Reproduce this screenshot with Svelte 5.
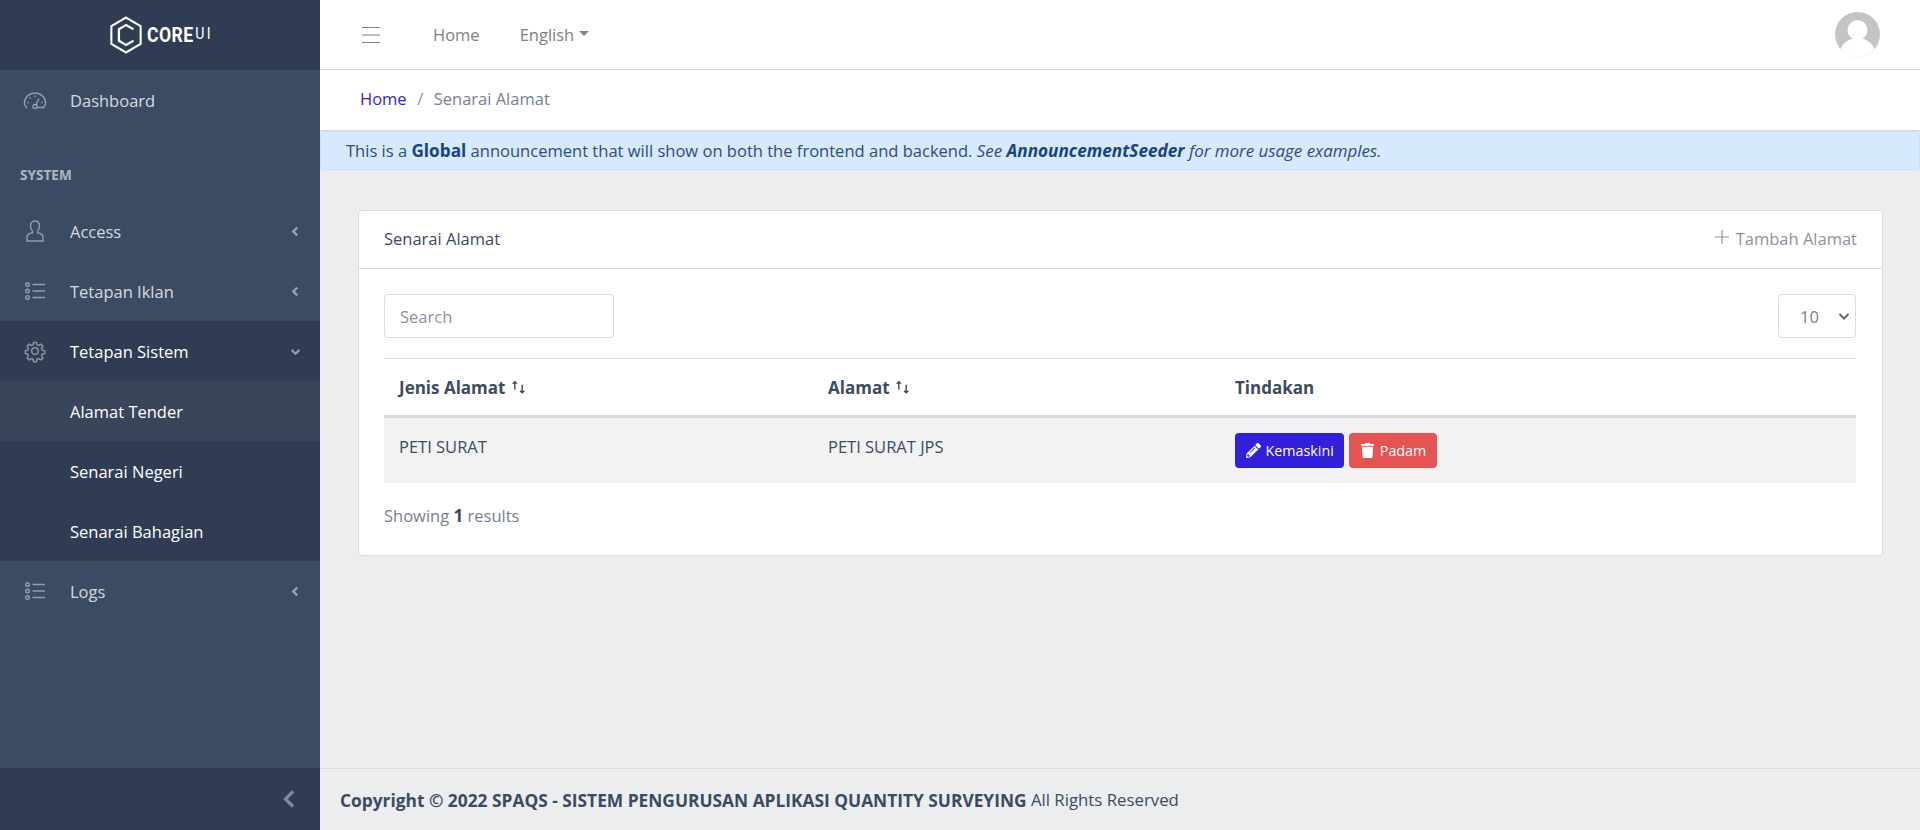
<script>
  const columns = [
    { label: 'Jenis Alamat', sort: true, width: '429px' },
    { label: 'Alamat', sort: true, width: '407px' },
    { label: 'Tindakan', sort: false, width: 'auto' }
  ];
</script>

{#snippet navIcon(name)}
  <svg class="nav-icon" viewBox="0 0 24 24" fill="none" stroke="currentColor" stroke-width="1.4">
    {#if name === 'speedometer'}
      <path d="M4.200 19.500h-.9C2 18 1.400 16.500 1.400 14.800 1.400 9.500 6 5 12 5s10.600 4.500 10.600 9.800c0 1.700-.6 3.200-1.900 4.700h-6.500" />
      <circle cx="12" cy="18.500" r="2" />
      <path d="M13 16.800l2.900-6.300M12 7.500V9M6.500 9.500l1 1M4.300 14.500h1.500M18.200 14.500h1.500" />
    {:else if name === 'user'}
      <path d="M12 2c-3 0-4.500 2.200-4.500 5 0 2 .7 3.800 2 5v1.800c-2.800.6-5.500 1.700-5.500 3.800V22h16v-4.400c0-2.100-2.700-3.200-5.500-3.800V12c1.300-1.200 2-3 2-5 0-2.800-1.500-5-4.500-5z" />
    {:else if name === 'list'}
      <circle cx="4.500" cy="5.500" r="1.800" />
      <circle cx="4.500" cy="12" r="1.800" />
      <circle cx="4.500" cy="18.500" r="1.800" />
      <path d="M9.500 5.500h12.500M9.500 12h12.500M9.500 18.500h12.500" />
    {:else if name === 'settings'}
      <g transform="translate(12 12) scale(.82) translate(-12 -12)" stroke-width="1.800" stroke-linejoin="round">
        <path d="M10.200 1.500h3.600l.5 3 2.300.9 2.500-1.800 2.600 2.600-1.800 2.500.9 2.300 3 .5v3.600l-3 .5-.9 2.300 1.800 2.500-2.600 2.600-2.500-1.800-2.300.9-.5 3h-3.600l-.5-3-2.300-.9-2.500 1.800-2.600-2.600 1.800-2.500-.9-2.300-3-.5v-3.600l3-.5.9-2.300-1.800-2.500 2.600-2.600 2.500 1.800 2.300-.9z" />
        <circle cx="12" cy="12" r="4" />
      </g>
    {/if}
  </svg>
{/snippet}

{#snippet navItem(label, icon, open, chevron)}
  <div class="nav-item" class:open>
    {@render navIcon(icon)}
    <span>{label}</span>
    {#if chevron}
      <svg class="chev" class:down={open} viewBox="0 0 10 10" fill="none" stroke="currentColor" stroke-width="2">
        <path d="M6.500 1.500L3 5l3.500 3.500" />
      </svg>
    {/if}
  </div>
{/snippet}

<div class="app">
  <aside class="sidebar">
    <div class="brand">
      <svg class="hex" viewBox="0 0 36 40" fill="none" stroke="#fff">
        <path stroke-width="2.200" d="M18 1.500L33.500 10.500v19L18 38.500 2.500 29.500v-19z" />
        <path stroke-width="2.400" d="M26 13.800L18 9.500 10.500 13.800v12.400L18 30.500l8-4.300" />
      </svg>
      <span class="brand-text">CORE<span class="brand-ui">UI</span></span>
    </div>
    <nav class="nav">
      {@render navItem('Dashboard', 'speedometer', false, false)}
      <div class="nav-title">SYSTEM</div>
      {@render navItem('Access', 'user', false, true)}
      {@render navItem('Tetapan Iklan', 'list', false, true)}
      {@render navItem('Tetapan Sistem', 'settings', true, true)}
      <div class="sub">
        <div class="sub-item active">Alamat Tender</div>
        <div class="sub-item">Senarai Negeri</div>
        <div class="sub-item">Senarai Bahagian</div>
      </div>
      {@render navItem('Logs', 'list', false, true)}
    </nav>
    <div class="minimizer">
      <svg viewBox="0 0 14 20" fill="none" stroke="currentColor" stroke-width="3.200">
        <path d="M11 2.500L3.500 10l7.500 7.500" />
      </svg>
    </div>
  </aside>

  <div class="main">
    <header class="topbar">
      <svg class="burger" viewBox="0 0 18 18" stroke="currentColor" stroke-width="1">
        <path d="M0 1.500h18M0 9h18M0 16.500h18" />
      </svg>
      <a class="top-link">Home</a>
      <a class="top-link">English<i class="caret"></i></a>
      <svg class="avatar" viewBox="0 0 45 45">
        <circle cx="22.500" cy="22.500" r="22.500" fill="#c4c4c4" />
        <circle cx="22.500" cy="18" r="10" fill="#fff" />
        <path d="M5.500 37c3-7 9-11 17-11s14 4 17 11c-4 5-10 8-17 8s-13-3-17-8z" fill="#fff" />
      </svg>
    </header>

    <div class="crumbs">
      <a class="crumb-link">Home</a>
      <span class="sep">/</span>
      <span>Senarai Alamat</span>
    </div>

    <div class="announce">
      This is a <strong>Global</strong> announcement that will show on both the frontend and backend.
      <em>See <strong>AnnouncementSeeder</strong> for more usage examples.</em>
    </div>

    <main class="content">
      <section class="card">
        <div class="card-head">
          <span>Senarai Alamat</span>
          <a class="add">
            <svg viewBox="0 0 16 16" stroke="currentColor" stroke-width="1.200"><path d="M8 1v14M1 8h14" /></svg>
            Tambah Alamat
          </a>
        </div>
        <div class="card-body">
          <div class="tools">
            <input class="search" type="text" placeholder="Search" />
            <div class="perpage">
              <span>10</span>
              <svg viewBox="0 0 12 12" fill="none" stroke="currentColor" stroke-width="2"><path d="M1.500 4L6 8.500 10.500 4" /></svg>
            </div>
          </div>

          <table>
            <thead>
              <tr>
                {#each columns as col}
                  <th style:width={col.width}>
                    {col.label}
                    {#if col.sort}
                      <svg class="sort" viewBox="0 0 16 14" fill="none" stroke="currentColor" stroke-width="1.300">
                        <path d="M4.500 9V1.500M2.500 3.500l2-2 2 2M11.500 4.500V12M9.500 10l2 2 2-2" />
                      </svg>
                    {/if}
                  </th>
                {/each}
              </tr>
            </thead>
            <tbody>
              <tr>
                <td>PETI SURAT</td>
                <td>PETI SURAT JPS</td>
                <td class="actions">
                  <button class="btn primary">
                    <svg viewBox="0 0 512 512" fill="currentColor"><path d="M497.900 142.100l-46.100 46.100c-4.700 4.700-12.300 4.700-17 0l-111-111c-4.700-4.700-4.700-12.300 0-17l46.100-46.100c18.700-18.700 49.100-18.700 67.900 0l60.100 60.100c18.800 18.700 18.800 49.100 0 67.900zM284.200 99.800L21.600 362.400.4 483.900c-2.900 16.400 11.400 30.600 27.800 27.800l121.500-21.300 262.600-262.600c4.700-4.700 4.700-12.300 0-17l-111-111c-4.800-4.700-12.400-4.700-17.100 0zM124.100 339.900c-5.500-5.500-5.500-14.300 0-19.800l154-154c5.500-5.500 14.300-5.500 19.800 0s5.500 14.300 0 19.800l-154 154c-5.500 5.500-14.300 5.500-19.800 0zM88 424h48v36.300l-64.500 11.300-31.100-31.100L51.700 376H88v48z" /></svg>
                    Kemaskini
                  </button>
                  <button class="btn danger">
                    <svg viewBox="0 0 448 512" fill="currentColor"><path d="M432 32H312l-9.400-18.700A24 24 0 0 0 281.100 0H166.800a23.700 23.700 0 0 0-21.400 13.300L136 32H16A16 16 0 0 0 0 48v32a16 16 0 0 0 16 16h416a16 16 0 0 0 16-16V48a16 16 0 0 0-16-16zM53.200 467a48 48 0 0 0 47.900 45h245.800a48 48 0 0 0 47.900-45L416 128H32z" /></svg>
                    Padam
                  </button>
                </td>
              </tr>
            </tbody>
          </table>

          <div class="showing">Showing <strong>1</strong> results</div>
        </div>
      </section>
    </main>

    <footer class="footer">
      <strong>Copyright © 2022 SPAQS - SISTEM PENGURUSAN APLIKASI QUANTITY SURVEYING</strong>&nbsp;All Rights Reserved
    </footer>
  </div>
</div>

<style>
  :global(body) {
    margin: 0;
    font-family: 'Open Sans', 'Noto Sans', sans-serif;
    font-size: 16.5px;
    color: #3c4b64;
  }
  strong { font-size: 17.2px; }
  .app { display: flex; height: 830px; overflow: hidden; }

  .sidebar {
    width: 320px;
    flex: none;
    display: flex;
    flex-direction: column;
    background: #3c4b64;
    color: #fff;
  }
  .brand {
    height: 70px;
    flex: none;
    display: flex;
    align-items: center;
    justify-content: center;
    gap: 4px;
    background: #303c54;
  }
  .hex { width: 34px; height: 38px; }
  .brand-text {
    width: 64px;
    font-family: Roboto, sans-serif;
    font-weight: 700;
    font-size: 20px;
    letter-spacing: 0.5px;
    line-height: 1;
    white-space: nowrap;
    transform: scaleX(0.88);
    transform-origin: left center;
  }
  .brand-ui {
    font-size: 16px;
    font-weight: 400;
    letter-spacing: 2.500px;
    margin-left: 2px;
    position: relative;
    top: -3px;
  }

  .nav { flex: 1; }
  .nav-item {
    height: 60px;
    display: flex;
    align-items: center;
    color: rgba(255, 255, 255, 0.8);
    padding: 0 19px 0 23px;
  }
  .nav-item.open { background: #303c54; color: #fff; }
  .nav-icon { width: 24px; height: 24px; margin-right: 23px; color: rgba(255, 255, 255, 0.45); flex: none; }
  .chev { width: 11px; height: 11px; margin-left: auto; color: rgba(255, 255, 255, 0.5); }
  .chev.down { transform: rotate(-90deg); }
  .nav-title {
    height: 71px;
    box-sizing: border-box;
    padding: 35px 0 0 20px;
    font-size: 13.600px;
    font-weight: 700;
    line-height: 20px;
    color: rgba(255, 255, 255, 0.6);
  }
  .sub { background: #303c54; }
  .sub-item { height: 60px; display: flex; align-items: center; padding-left: 70px; color: #fff; }
  .sub-item.active { background: rgba(255, 255, 255, 0.05); }
  .minimizer {
    height: 62px;
    flex: none;
    background: #303c54;
    display: flex;
    align-items: center;
    justify-content: flex-end;
    padding-right: 24px;
    color: rgba(255, 255, 255, 0.4);
  }
  .minimizer svg { width: 14px; height: 20px; }

  .main { flex: 1; min-width: 0; display: flex; flex-direction: column; background: #ebedef; }
  .topbar {
    height: 69px;
    flex: none;
    display: flex;
    align-items: center;
    background: #fff;
    border-bottom: 1px solid #d8dbe0;
    padding: 0 40px 0 42px;
    color: #808087;
  }
  .burger { width: 18px; height: 18px; margin-right: 53px; }
  .top-link { margin-right: 40px; display: flex; align-items: center; }
  .caret {
    display: inline-block;
    margin-left: 5px;
    border-top: 5px solid;
    border-left: 5px solid transparent;
    border-right: 5px solid transparent;
    margin-top: -3px;
  }
  .avatar { width: 45px; height: 45px; margin-left: auto; }

  .crumbs {
    height: 61px;
    flex: none;
    display: flex;
    align-items: center;
    gap: 10.500px;
    padding: 0 0 3px 40px;
    background: #fff;
    border-bottom: 1px solid #d8dbe0;
    box-sizing: border-box;
    color: #768192;
  }
  .crumb-link { color: #321fdb; }
  .sep { color: #8a93a2; }

  .announce {
    height: 39px;
    flex: none;
    box-sizing: border-box;
    padding: 9px 25px 0;
    line-height: 20px;
    font-size: 16.550px;
    background: #d6e9fd;
    border: 1px solid #c6dff9;
    border-radius: 4px;
    color: #2d4d7c;
    white-space: nowrap;
  }
  .announce em { font-size: 16.900px; }
  .announce strong { color: #16457f; }

  .content { flex: 1; padding: 40px 37px 0 38px; }
  .card { background: #fff; border: 1px solid #d8dbe0; border-radius: 4px; }
  .card-head {
    height: 58px;
    box-sizing: border-box;
    display: flex;
    align-items: center;
    justify-content: space-between;
    padding: 0 25px 2px;
    border-bottom: 1px solid #d8dbe0;
  }
  .add { display: flex; align-items: center; gap: 6px; color: #8a93a2; }
  .add svg { width: 16px; height: 16px; margin-top: -3px; }
  .card-body { padding: 25px 26px 0 25px; }

  .tools { display: flex; justify-content: space-between; height: 44px; margin-bottom: 20px; }
  .search, .perpage {
    box-sizing: border-box;
    height: 44px;
    display: flex;
    align-items: center;
    background: #fff;
    border: 1px solid #d8dbe0;
    border-radius: 4px;
  }
  .search { width: 230px; padding: 0 15px; font: inherit; }
  .search::placeholder { color: #8a93a2; opacity: 1; }
  .perpage { width: 78px; padding: 0 5px 0 21px; justify-content: space-between; color: #768192; }
  .perpage svg { width: 12px; height: 12px; color: #5c6873; }

  table { width: 100%; border-collapse: collapse; }
  th {
    text-align: left;
    height: 58px;
    padding: 0 15px;
    box-sizing: border-box;
    border-top: 1px solid #d8dbe0;
    border-bottom: 3px solid #d8dbe0;
    font-size: 17px;
    font-weight: 700;
    white-space: nowrap;
  }
  .sort { width: 17px; height: 15px; vertical-align: -1px; }
  td {
    height: 65px;
    padding: 18px 15px 0;
    vertical-align: top;
    box-sizing: border-box;
    background: #f2f2f3;
    line-height: 22px;
  }
  td.actions { padding-top: 15px; display: flex; gap: 5px; }
  .btn {
    height: 35px;
    display: inline-flex;
    align-items: center;
    gap: 5px;
    padding: 0 10.500px;
    border: 0;
    border-radius: 4px;
    color: #fff;
    font: inherit;
    font-size: 14.300px;
  }
  .btn svg { width: 15px; height: 15px; }
  .primary { background: #321fdb; }
  .danger { background: #e55353; }

  .showing { margin-top: 21px; height: 51px; line-height: 24px; color: #768192; }
  .showing strong { color: #3c4b64; }

  .footer {
    height: 61px;
    flex: none;
    display: flex;
    align-items: center;
    padding-left: 20px;
    background: #ebedef;
    border-top: 1px solid #d8dbe0;
    white-space: nowrap;
    font-size: 16.800px;
  }
  .footer strong { font-size: 17.330px; }
</style>
